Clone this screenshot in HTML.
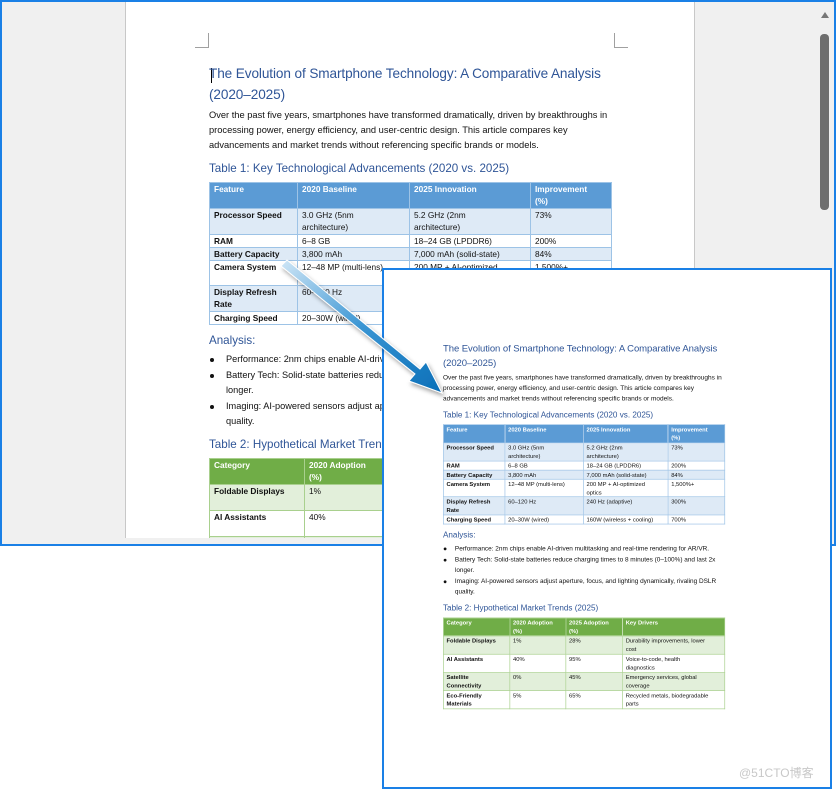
<!DOCTYPE html>
<html><head><meta charset="utf-8"><style>
*{margin:0;padding:0;box-sizing:border-box}
body{width:836px;height:789px;background:#fff;position:relative;overflow:hidden;font-family:"Liberation Sans",Carlito,sans-serif}
#win{position:absolute;left:0;top:0;width:836px;height:546px;border:2px solid #1a80e6;background:#f0f0f0;overflow:hidden}
#page{position:absolute;left:123px;top:0;width:570px;height:540px;background:#fff;border-left:1px solid #c8c8c8;border-right:1px solid #c8c8c8}
.mk{position:absolute;width:14px;height:15px;border-color:#a0a0a0;border-style:solid;border-width:0}
#sb{position:absolute;left:816px;top:6px;width:14px;height:532px;background:#f0f0f0}
.doc{position:absolute;width:402px;color:#111}
.doc h1{font-weight:normal;font-size:13.6px;line-height:21px;color:#2f5597;letter-spacing:-0.1px;white-space:nowrap}
.doc p{font-size:9.3px;line-height:15px;margin-top:3px;white-space:nowrap}
.doc h2{font-weight:normal;font-size:11.6px;line-height:16px;color:#2f5597;margin-top:8px}
.doc table{border-collapse:collapse;margin-top:5px;width:402px;table-layout:fixed;font-size:8.3px}
.doc td{vertical-align:top;line-height:12px;padding:0 4px 0 4px;overflow:hidden;white-space:nowrap}
.t1 td{border:1px solid #9dc3e6}
.t1 tr.h td{background:#5b9bd5;color:#fff;font-weight:bold;border-color:#9dc3e6}
.t1 tr.b td{background:#deeaf6}
.t1 td:first-child{font-weight:bold}
.t2 td{border:1px solid #a9d08e}
.t2 tr.h td{background:#70ad47;color:#fff;font-weight:bold}
.t2 tr.b td{background:#e2efda}
.t2 td:first-child{font-weight:bold}
.doc ul{list-style:none;margin-top:3px;font-size:9.2px;line-height:15px;white-space:nowrap}
.doc li{position:relative;padding-left:17px;margin-bottom:1px}
.doc li:before{content:"";position:absolute;left:1px;top:6px;width:4px;height:4px;border-radius:50%;background:#111}
#ov{position:absolute;left:382px;top:268px;width:450px;height:521px;border:2px solid #1a80e6;background:#fff;overflow:hidden}
</style></head><body>
<div id="win">
 <div id="page">
  <div class="mk" style="left:69px;top:31px;border-right-width:1px;border-bottom-width:1px"></div>
  <div class="mk" style="left:488px;top:31px;border-left-width:1px;border-bottom-width:1px"></div>
  <div style="position:absolute;left:85px;top:66px;width:1px;height:15px;background:#000"></div>
 </div>
 <div id="sb">
  <div style="position:absolute;left:3px;top:4px;width:0;height:0;border-left:4px solid transparent;border-right:4px solid transparent;border-bottom:6px solid #777"></div>
  <div style="position:absolute;left:2px;top:26px;width:9px;height:176px;background:#6e6e6e;border-radius:4px"></div>
  <div style="position:absolute;left:3px;top:518px;width:0;height:0;border-left:4px solid transparent;border-right:4px solid transparent;border-top:6px solid #777"></div>
 </div>
 <div class="doc" id="d1" style="left:207px;top:61px">
 <h1>The Evolution of Smartphone Technology: A Comparative Analysis<br>(2020–2025)</h1>
 <p>Over the past five years, smartphones have transformed dramatically, driven by breakthroughs in<br>processing power, energy efficiency, and user-centric design. This article compares key<br>advancements and market trends without referencing specific brands or models.</p>
 <h2>Table 1: Key Technological Advancements (2020 vs. 2025)</h2>
 <table class="t1"><colgroup><col style="width:88px"><col style="width:112px"><col style="width:121px"><col style="width:81px"></colgroup>
 <tr class="h" style="height:26px"><td>Feature</td><td>2020 Baseline</td><td>2025 Innovation</td><td>Improvement<br>(%)</td></tr>
 <tr class="b" style="height:26px"><td>Processor Speed</td><td>3.0 GHz (5nm<br>architecture)</td><td>5.2 GHz (2nm<br>architecture)</td><td>73%</td></tr>
 <tr style="height:13px"><td>RAM</td><td>6–8 GB</td><td>18–24 GB (LPDDR6)</td><td>200%</td></tr>
 <tr class="b" style="height:13px"><td>Battery Capacity</td><td>3,800 mAh</td><td>7,000 mAh (solid-state)</td><td>84%</td></tr>
 <tr style="height:25px"><td>Camera System</td><td>12–48 MP (multi-lens)</td><td>200 MP + AI-optimized<br>optics</td><td>1,500%+</td></tr>
 <tr class="b" style="height:26px"><td>Display Refresh<br>Rate</td><td>60–120 Hz</td><td>240 Hz (adaptive)</td><td>300%</td></tr>
 <tr style="height:13px"><td>Charging Speed</td><td>20–30W (wired)</td><td>160W (wireless + cooling)</td><td>700%</td></tr>
 </table>
 <h2>Analysis:</h2>
 <ul>
 <li>Performance: 2nm chips enable AI-driven multitasking and real-time rendering for AR/VR.</li>
 <li>Battery Tech: Solid-state batteries reduce charging times to 8 minutes (0–100%) and last 2x<br>longer.</li>
 <li>Imaging: AI-powered sensors adjust aperture, focus, and lighting dynamically, rivaling DSLR<br>quality.</li>
 </ul>
 <h2>Table 2: Hypothetical Market Trends (2025)</h2>
 <table class="t2"><colgroup><col style="width:95px"><col style="width:80px"><col style="width:81px"><col style="width:146px"></colgroup>
 <tr class="h" style="height:26px"><td>Category</td><td>2020 Adoption<br>(%)</td><td>2025 Adoption<br>(%)</td><td>Key Drivers</td></tr>
 <tr class="b" style="height:26px"><td>Foldable Displays</td><td>1%</td><td>28%</td><td>Durability improvements, lower<br>cost</td></tr>
 <tr style="height:26px"><td>AI Assistants</td><td>40%</td><td>95%</td><td>Voice-to-code, health<br>diagnostics</td></tr>
 <tr class="b" style="height:26px"><td>Satellite<br>Connectivity</td><td>0%</td><td>45%</td><td>Emergency services, global<br>coverage</td></tr>
 <tr style="height:26px"><td>Eco-Friendly<br>Materials</td><td>5%</td><td>65%</td><td>Recycled metals, biodegradable<br>parts</td></tr>
 </table>
 </div>
 <div style="position:absolute;left:0;top:536px;width:832px;height:8px;background:#f0f0f0"></div>
</div>
<div id="ov"><div id="d2holder"></div></div>
<svg style="position:absolute;left:0;top:0" width="836" height="789">
 <defs><linearGradient id="g" x1="0" y1="0" x2="1" y2="1"><stop offset="0" stop-color="#cfe6f6"/><stop offset="0.5" stop-color="#3a95d3"/><stop offset="1" stop-color="#0a6fb8"/></linearGradient>
 <filter id="s"><feDropShadow dx="2" dy="3" stdDeviation="2" flood-color="#000" flood-opacity="0.35"/></filter></defs>
 <polygon filter="url(#s)" points="284,263 287,260 420,369 426,362 442,393 409,381 415,374 281,266" fill="url(#g)" stroke="#fff" stroke-width="1"/>
</svg>
<div style="position:absolute;left:739px;top:764px;font-size:12px;color:#c8c8c8;font-family:'Liberation Sans','Noto Sans CJK SC',sans-serif">@51CTO博客</div>
<script>
var d=document.getElementById('d1').cloneNode(true);d.id='d2';
d.style.left='59px';d.style.top='71px';d.style.transform='scale(0.7)';d.style.transformOrigin='0 0';
document.getElementById('d2holder').appendChild(d);
</script>
</body></html>
